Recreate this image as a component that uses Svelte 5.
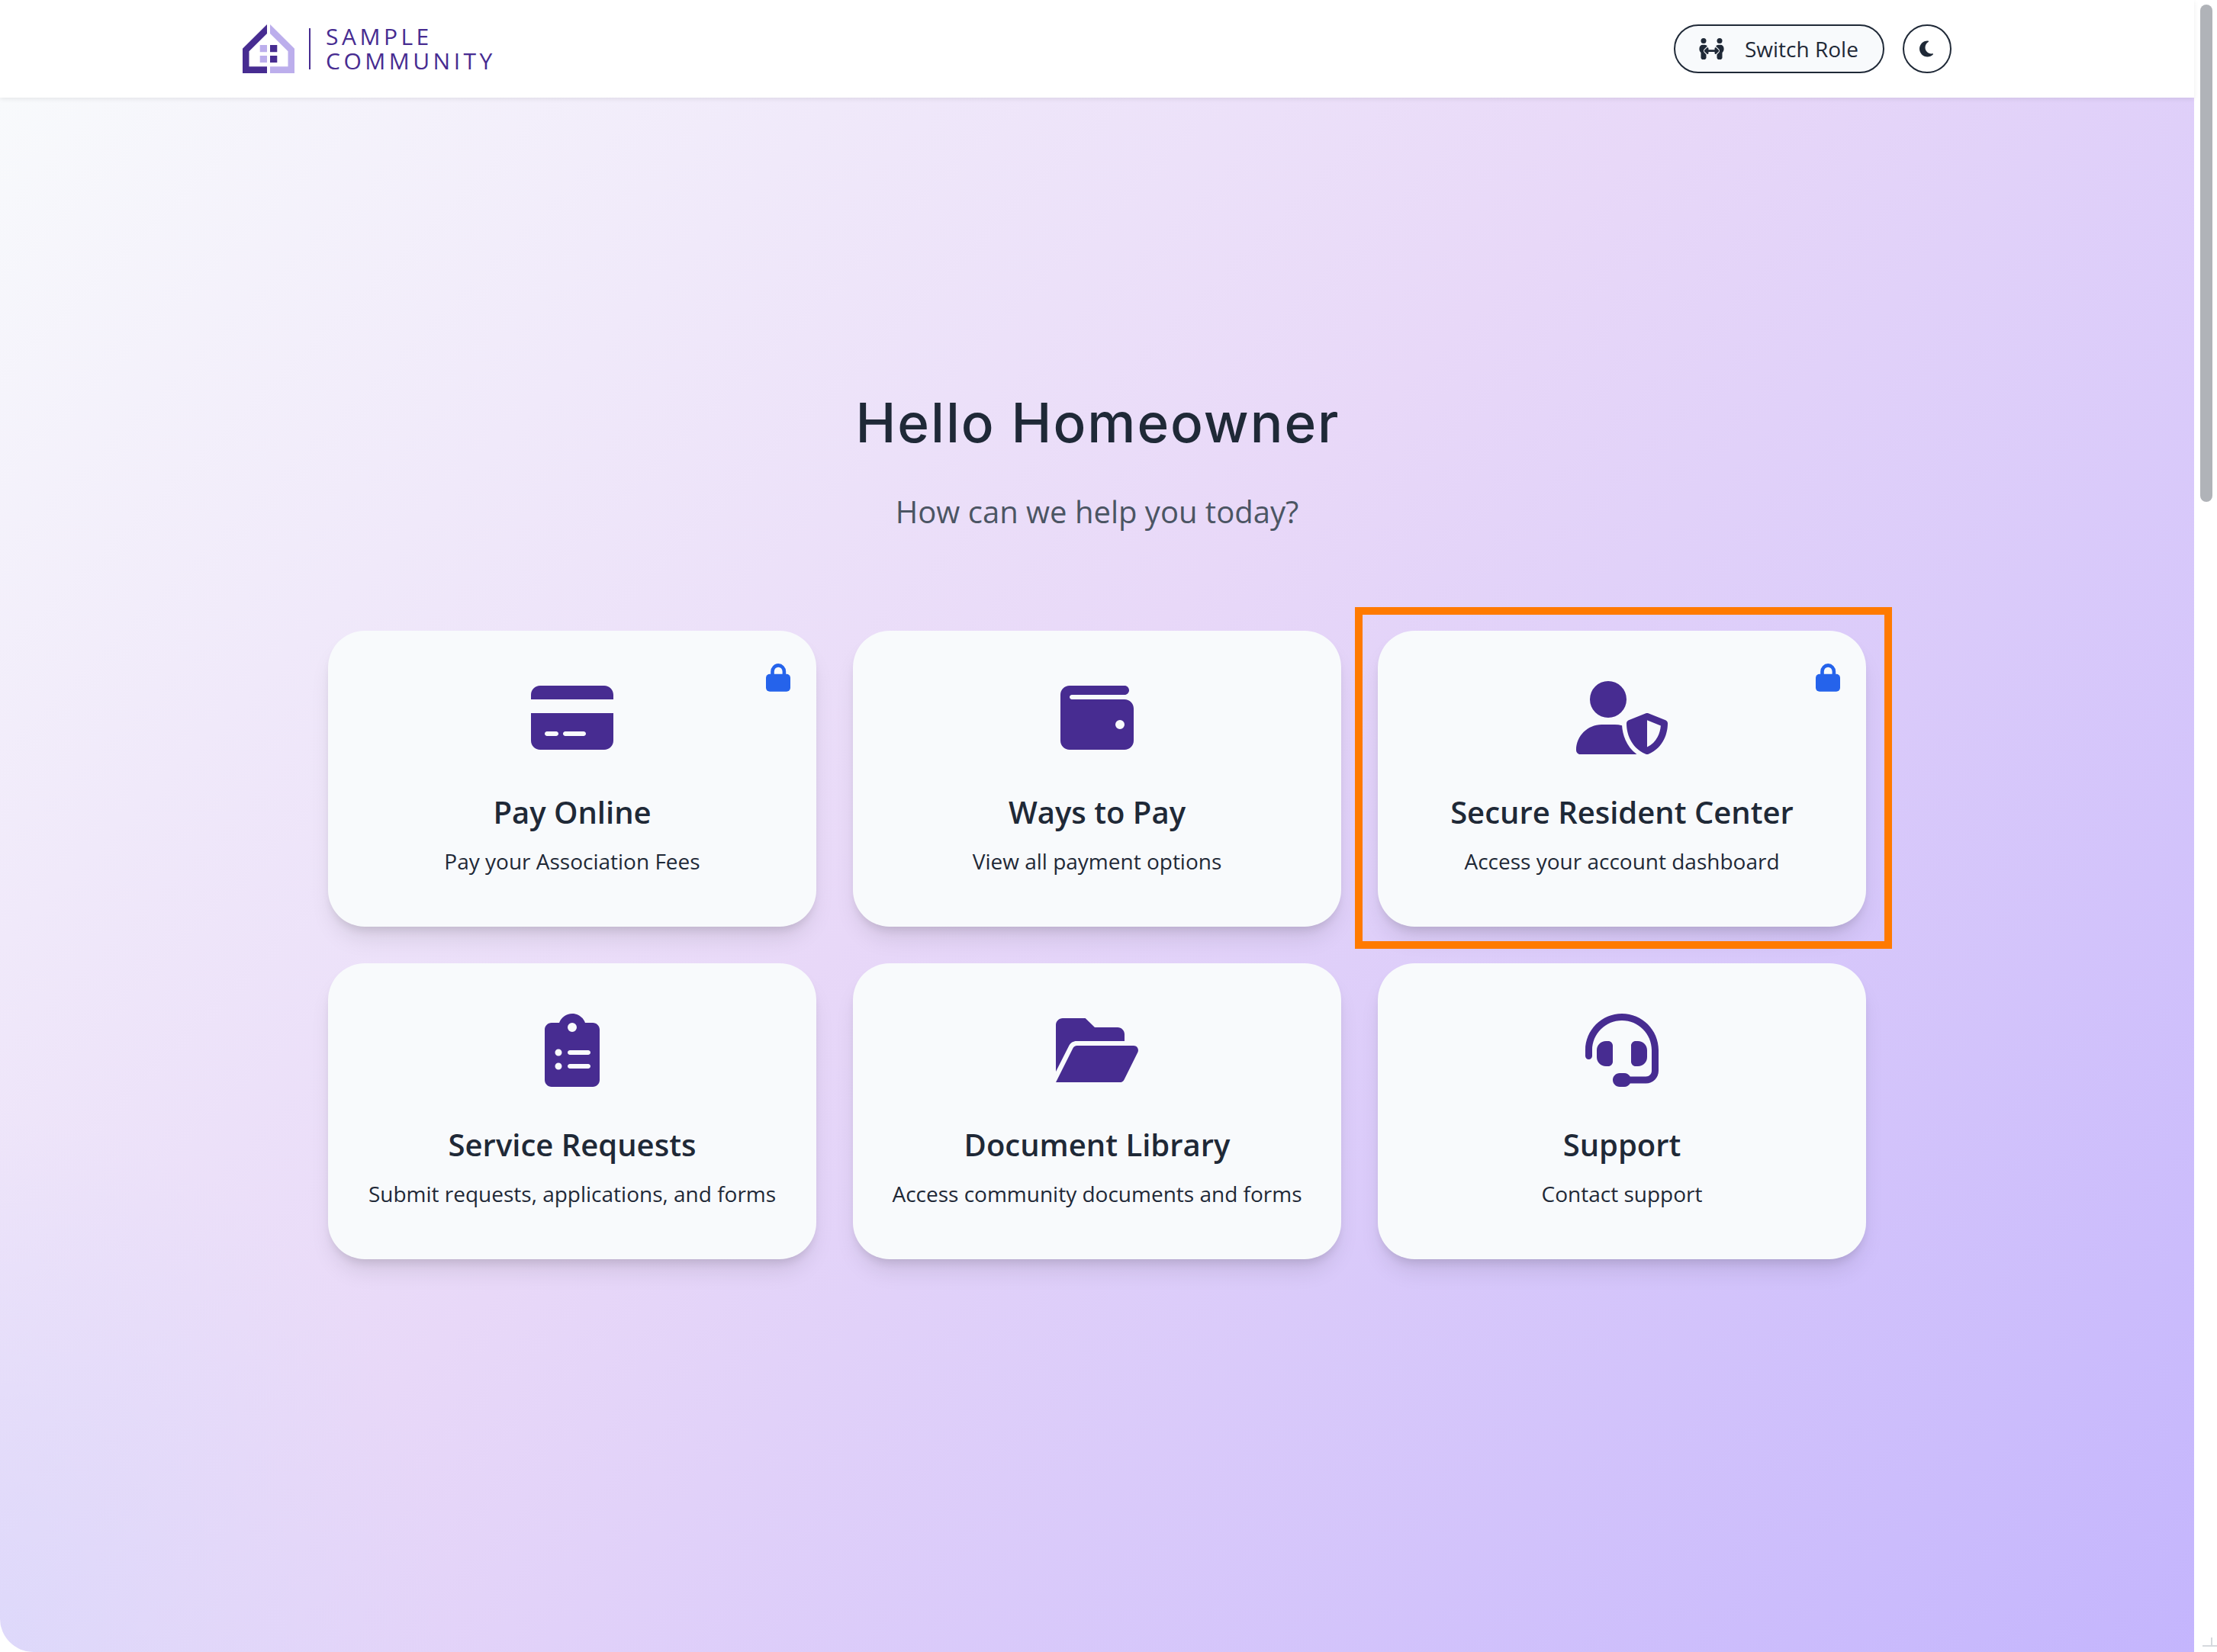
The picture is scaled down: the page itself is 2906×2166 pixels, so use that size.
<script lang="ts">
  interface Tile {
    title: string;
    text: string;
    width: number;
    icon: string;
    locked?: boolean;
    highlighted?: boolean;
  }

  // Icon paths share a 512 unit tall viewBox; width is the viewBox width.
  const tiles: Tile[] = [
    {
      title: "Pay Online",
      text: "Pay your Association Fees",
      width: 576,
      icon: "M64 32C28.7 32 0 60.7 0 96v32H576V96c0-35.3-28.7-64-64-64H64zM576 224H0V416c0 35.3 28.7 64 64 64H512c35.3 0 64-28.7 64-64V224zM112 352h64c8.8 0 16 7.2 16 16s-7.2 16-16 16H112c-8.8 0-16-7.2-16-16s7.2-16 16-16zm112 16c0-8.8 7.2-16 16-16H368c8.8 0 16 7.2 16 16s-7.2 16-16 16H240c-8.8 0-16-7.2-16-16z",
      locked: true,
    },
    {
      title: "Ways to Pay",
      text: "View all payment options",
      width: 512,
      icon: "M64 32C28.7 32 0 60.7 0 96V416c0 35.3 28.7 64 64 64H448c35.3 0 64-28.7 64-64V192c0-35.3-28.7-64-64-64H80c-8.8 0-16-7.2-16-16s7.2-16 16-16H448c17.7 0 32-14.3 32-32s-14.3-32-32-32H64zM416 272a32 32 0 1 1 0 64 32 32 0 1 1 0-64z",
    },
    {
      title: "Secure Resident Center",
      text: "Access your account dashboard",
      width: 640,
      icon: "M224 256A128 128 0 1 0 224 0a128 128 0 1 0 0 256zm-45.7 48C79.8 304 0 383.8 0 482.3C0 498.7 13.3 512 29.7 512H418.3c1.8 0 3.5-.2 5.3-.5c-76.3-55.1-99.8-141-103.1-200.2c-16.1-4.8-33.1-7.3-50.7-7.3H178.3zm308.8-78.3l-120 48C358 277.4 352 286.2 352 296c0 63.3 25.9 168.8 134.8 214.2c5.9 2.5 12.6 2.5 18.5 0C614.1 464.8 640 359.3 640 296c0-9.8-6-18.6-15.1-22.3l-120-48c-5.7-2.3-12.1-2.3-17.8 0zM591.4 312c-3.9 50.7-27.2 116.7-95.4 149.7V273.8L591.4 312z",
      locked: true,
      highlighted: true,
    },
    {
      title: "Service Requests",
      text: "Submit requests, applications, and forms",
      width: 384,
      icon: "M192 0c-41.8 0-77.4 26.7-90.5 64H48C21.5 64 0 85.5 0 112V464c0 26.5 21.5 48 48 48H336c26.5 0 48-21.5 48-48V112c0-26.5-21.5-48-48-48H282.5C269.4 26.7 233.8 0 192 0zm0 64a32 32 0 1 1 0 64 32 32 0 1 1 0-64zM72 272a24 24 0 1 1 48 0 24 24 0 1 1 -48 0zm104-16H304c8.8 0 16 7.2 16 16s-7.2 16-16 16H176c-8.8 0-16-7.2-16-16s7.2-16 16-16zM72 368a24 24 0 1 1 48 0 24 24 0 1 1 -48 0zm88 0c0-8.8 7.2-16 16-16H304c8.8 0 16 7.2 16 16s-7.2 16-16 16H176c-8.8 0-16-7.2-16-16z",
    },
    {
      title: "Document Library",
      text: "Access community documents and forms",
      width: 576,
      icon: "M48 32H206L272 96H432c26.5 0 48 21.5 48 48v48H144c-22 0-42 12-52 32L0 405V80C0 53.5 21.5 32 48 32zM0 480L119 242c5.4-11 16.6-18 28.6-18H544c24 0 38 24 29 45L477 462c-6 11-17 18-29 18z",
    },
    {
      title: "Support",
      text: "Contact support",
      width: 512,
      icon: "M256 48C141.1 48 48 141.1 48 256v40c0 13.3-10.7 24-24 24s-24-10.7-24-24V256C0 114.6 114.6 0 256 0S512 114.6 512 256V400.1c0 48.6-39.4 88-88.1 88L313.6 488c-8.3 14.3-23.8 24-41.6 24H240c-26.5 0-48-21.5-48-48s21.5-48 48-48h32c17.8 0 33.3 9.7 41.6 24l110.4 .1c22.1 0 40-17.9 40-40V256c0-114.9-93.1-208-208-208zM144 192h16c17.7 0 32 14.3 32 32V336c0 17.7-14.3 32-32 32H144c-35.3 0-64-28.7-64-64V256c0-35.3 28.7-64 64-64zm224 0c35.3 0 64 28.7 64 64v48c0 35.3-28.7 64-64 64H352c-17.7 0-32-14.3-32-32V224c0-17.7 14.3-32 32-32h16z",
    },
  ];
</script>

<div class="window">
  <div class="page">
    <header class="topbar">
      <a class="brand" href="#home">
        <svg width="68" height="64" viewBox="0 0 68 64" aria-hidden="true">
          <path fill="#472c91" d="M32 0V12L8.5 35.3V55.3H32V64H0V31.7zM36 27h9.3v9.3H36zM36 41h9.3v9H36z" />
          <path fill="#bcaeec" d="M36 0L68 31.7V64H36V55.3H59.5V35.3L36 12zM22.7 27H32v9.3H22.7zM22.7 41H32v9H22.7z" />
        </svg>
        <span class="divider"></span>
        <span class="name">SAMPLE<br />COMMUNITY</span>
      </a>

      <nav class="actions">
        <button class="role">
          <svg width="35" height="28" viewBox="0 0 640 512" fill="currentColor" aria-hidden="true">
            <circle cx="128" cy="64" r="64" />
            <circle cx="512" cy="64" r="64" />
            <path d="M105 160h46c27 0 51 13 65 34-3 2-5 4-8 6l-64 64c-22 22-22 58 0 80l48 48v72c0 26.500-21.500 48-48 48h-32c-26.500 0-48-21.500-48-48V348l-4-4c-24-24-37-58-34-93l2-18c3-41 36-73 77-73z" />
            <path d="M535 160h-46c-27 0-51 13-65 34 3 2 5 4 8 6l64 64c22 22 22 58 0 80l-48 48v72c0 26.500 21.500 48 48 48h32c26.500 0 48-21.500 48-48V348l4-4c24-24 37-58 34-93l-2-18c-3-41-36-73-77-73z" />
            <path d="M231 226c9 4 15 13 15 22v32h148v-32c0-9 6-18 15-22s19-2 26 5l56 56c9 9 9 25 0 34l-56 56c-7 7-17 9-26 5s-15-13-15-22v-32H246v32c0 9-6 18-15 22s-19 2-26-5l-56-56c-9-9-9-25 0-34l56-56c7-7 17-9 26-5z" />
          </svg>
          <span>Switch Role</span>
        </button>
        <button class="theme" aria-label="Toggle dark mode">
          <svg width="18" height="24" viewBox="0 0 384 512" fill="currentColor" aria-hidden="true">
            <path d="M223.5 32C100 32 0 132.300 0 256S100 480 223.500 480c60.600 0 115.500-24.200 155.800-63.400c5-4.900 6.300-12.500 3.100-18.700s-10.100-9.700-17-8.500c-9.800 1.700-19.800 2.600-30.100 2.600c-96.900 0-175.500-78.800-175.500-176c0-65.800 36-123.100 89.300-153.300c6.100-3.500 9.200-10.500 7.700-17.300s-7.300-11.900-14.300-12.500c-6.300-.5-12.600-.8-19-.8z" />
          </svg>
        </button>
      </nav>
    </header>

    <main class="hero">
      <h1>Hello Homeowner</h1>
      <p class="lead">How can we help you today?</p>

      <div class="tiles">
        {#each tiles as tile (tile.title)}
          <article class="tile" class:highlighted={tile.highlighted}>
            {#if tile.locked}
              <svg class="lock" width="32" height="37" viewBox="0 0 32 37" aria-hidden="true">
                <path d="M8.500 15V10.500a7.700 8.100 0 0 1 15.400 0V15" fill="none" stroke="currentColor" stroke-width="4.600" />
                <rect y="13.800" width="32" height="23" rx="5" fill="currentColor" />
              </svg>
            {/if}
            <svg class="icon" height="96" viewBox="0 0 {tile.width} 512" fill="currentColor" aria-hidden="true">
              <path d={tile.icon} />
            </svg>
            <h2>{tile.title}</h2>
            <p>{tile.text}</p>
          </article>
        {/each}
      </div>
    </main>
  </div>

  <div class="scrollbar">
    <div class="thumb"></div>
    <div class="corner"></div>
  </div>
</div>

<style>
  :global(body) {
    margin: 0;
    background: #fff;
  }
  .window {
    display: flex;
    width: 2906px;
    height: 2166px;
    overflow: hidden;
    background: #fff;
    border-bottom-left-radius: 44px;
    font-family: "Open Sans", "Noto Sans", sans-serif;
    color: #1f2937;
  }
  .page {
    display: flex;
    flex-direction: column;
    width: 2876px;
  }
  .topbar {
    display: flex;
    align-items: center;
    justify-content: space-between;
    box-sizing: border-box;
    height: 128px;
    padding: 0 318px;
    background: #fff;
    box-shadow: 0 2px 6px rgba(0, 0, 0, 0.08);
    z-index: 1;
  }
  .brand {
    display: flex;
    align-items: center;
    color: #472c91;
    text-decoration: none;
  }
  .divider {
    width: 2px;
    height: 54px;
    margin: 0 20px 0 19px;
    background: #472c91;
  }
  .name {
    font-size: 30px;
    line-height: 32.5px;
    letter-spacing: 4.5px;
  }
  .actions {
    display: flex;
    gap: 24px;
  }
  button {
    display: flex;
    align-items: center;
    box-sizing: border-box;
    height: 64px;
    border: 2px solid #1f2937;
    border-radius: 32px;
    font-family: inherit;
    font-size: 28px;
    color: inherit;
  }
  .role {
    gap: 26px;
    width: 276px;
    padding: 0 0 0 30px;
    background: #f8fafc;
    white-space: nowrap;
  }
  .theme {
    justify-content: center;
    width: 64px;
    padding: 0 2px 0 0;
    background: #fff;
  }
  .hero {
    flex: 1;
    padding: 381px 430px 0;
    background:
      radial-gradient(ellipse 600px 700px at 0 100%, rgba(214, 215, 252, 0.6), rgba(214, 215, 252, 0)),
      linear-gradient(135deg, #f8fafc 0%, #e8d8f8 45%, #c4b5fd 100%);
    text-align: center;
  }
  h1 {
    margin: 0 0 43px;
    font-family: Inter, sans-serif;
    font-size: 71px;
    font-weight: 500;
    line-height: 90px;
    letter-spacing: 2px;
    text-indent: 2px;
  }
  .lead {
    margin: 0 0 128px;
    padding-top: 1px;
    font-size: 40px;
    line-height: 56px;
    color: #4b5563;
  }
  .tiles {
    display: grid;
    grid-template-columns: repeat(3, 640px);
    gap: 48px;
  }
  .tile {
    position: relative;
    box-sizing: border-box;
    height: 388px;
    padding-top: 66px;
    border-radius: 48px;
    background: #f8fafc;
    box-shadow:
      0 20px 30px -6px rgba(0, 0, 0, 0.1),
      0 8px 12px -4px rgba(0, 0, 0, 0.1);
  }
  .tile.highlighted::after {
    content: "";
    position: absolute;
    inset: -31px -34px -29px -30px;
    border: 10px solid #ff7a00;
  }
  .icon {
    display: block;
    margin: 0 auto 48px;
    color: #472c91;
  }
  .lock {
    position: absolute;
    top: 43px;
    right: 34px;
    color: #2563eb;
  }
  h2 {
    margin: 0 0 16px;
    font-size: 40px;
    font-weight: 600;
    line-height: 56px;
  }
  .tile p {
    margin: 0;
    font-size: 28px;
    line-height: 40px;
  }
  .scrollbar {
    display: flex;
    flex-direction: column;
    align-items: center;
    justify-content: space-between;
    box-sizing: border-box;
    width: 30px;
    padding: 6px 0 7px;
  }
  .thumb {
    width: 16px;
    height: 652px;
    margin-left: 2px;
    border-radius: 8px;
    background: #b0b3b8;
  }
  .corner {
    box-sizing: border-box;
    align-self: flex-end;
    width: 19px;
    height: 12px;
    border-bottom: 2px solid #d5d9dd;
    background: linear-gradient(#d5d9dd, #d5d9dd) 11px 0 / 2px 100% no-repeat;
  }
</style>
